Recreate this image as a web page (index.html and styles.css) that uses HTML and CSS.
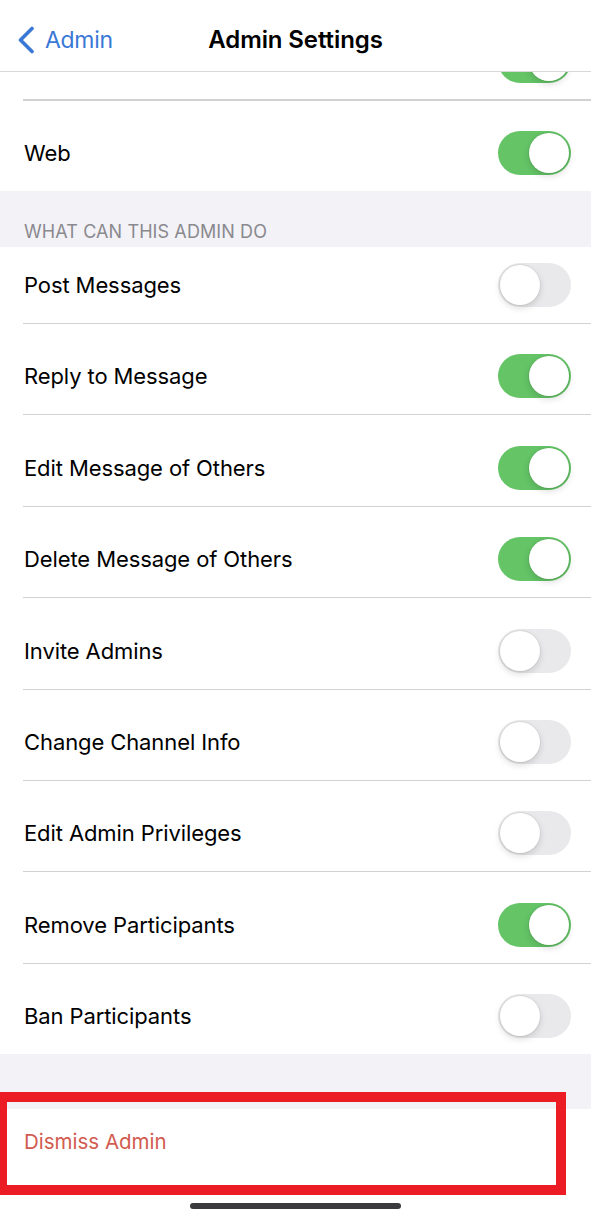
FILE: index.html
```html
<!DOCTYPE html>
<html lang="en">
<head>
    <meta charset="UTF-8">
    <meta name="viewport" content="width=device-width, initial-scale=1.0">
    <title>Admin Settings</title>
    <link rel="stylesheet" href="styles.css">
</head>
<body>
    <div class="screen">
        <div class="navbar">
            <a href="#" class="back">
                <svg class="chevron" width="18" height="28" viewBox="0 0 18 28">
                    <path d="M15 2.5 L3.5 14 L15 25.5" fill="none" stroke="currentColor" stroke-width="3.6" stroke-linecap="round" stroke-linejoin="round"/>
                </svg>
                <span>Admin</span>
            </a>
            <div class="title">Admin Settings</div>
            <div></div>
        </div>

        <div class="group">
            <div class="row partial">
                <span class="switch on"><span class="knob"></span></span>
            </div>
            <div class="row">
                <span class="label">Web</span>
                <span class="switch on"><span class="knob"></span></span>
            </div>
        </div>

        <div class="section-head">WHAT CAN THIS ADMIN DO</div>

        <div class="group">
            <div class="row first">
                <span class="label">Post Messages</span>
                <span class="switch"><span class="knob"></span></span>
            </div>
            <div class="row">
                <span class="label">Reply to Message</span>
                <span class="switch on"><span class="knob"></span></span>
            </div>
            <div class="row">
                <span class="label">Edit Message of Others</span>
                <span class="switch on"><span class="knob"></span></span>
            </div>
            <div class="row">
                <span class="label">Delete Message of Others</span>
                <span class="switch on"><span class="knob"></span></span>
            </div>
            <div class="row">
                <span class="label">Invite Admins</span>
                <span class="switch"><span class="knob"></span></span>
            </div>
            <div class="row">
                <span class="label">Change Channel Info</span>
                <span class="switch"><span class="knob"></span></span>
            </div>
            <div class="row">
                <span class="label">Edit Admin Privileges</span>
                <span class="switch"><span class="knob"></span></span>
            </div>
            <div class="row">
                <span class="label">Remove Participants</span>
                <span class="switch on"><span class="knob"></span></span>
            </div>
            <div class="row">
                <span class="label">Ban Participants</span>
                <span class="switch"><span class="knob"></span></span>
            </div>
        </div>

        <div class="section-gap"></div>

        <div class="danger-row">
            <a href="#" class="danger">Dismiss Admin</a>
        </div>

        <div class="home-bar"></div>

        <div class="highlight"></div>
    </div>
</body>
</html>
```

FILE: styles.css
```css
* {
    padding: 0;
    margin: 0;
    box-sizing: border-box;
    text-decoration: none;
}

body {
    background-color: #fff;
    font-family: "Inter", "Roboto", "Liberation Sans", sans-serif;
    color: #000;
}

.screen {
    position: relative;
    width: 591px;
    height: 1220px;
    overflow: hidden;
    display: flex;
    flex-direction: column;
}

/* top bar */
.navbar {
    height: 72px;
    padding-top: 8px;
    border-bottom: 1px solid #d7d7d9;
    display: grid;
    grid-template-columns: 1fr auto 1fr;
    align-items: center;
    background-color: #fff;
}
.back {
    display: flex;
    align-items: center;
    gap: 10px;
    padding-left: 17px;
    color: #3a78d6;
    font-size: 23px;
    letter-spacing: -0.3px;
}
.chevron {
    display: block;
}
.title {
    font-size: 24px;
    font-weight: 600;
    letter-spacing: -0.1px;
}

/* list rows */
.group {
    background-color: #fff;
}
.row {
    margin-left: 23px;
    padding: 14.4px 20px 0 1px;
    height: 91.4px;
    border-top: 1px solid #d2d2d5;
    display: flex;
    align-items: center;
    justify-content: space-between;
}
.row.first {
    border-top: none;
    padding-top: 0;
    height: 76px;
}
.row.partial {
    border-top: none;
    border-bottom: 1px solid #d2d2d5;
    padding-top: 0;
    height: 28px;
    overflow: hidden;
    align-items: flex-end;
    justify-content: flex-end;
}
.row.partial .switch {
    flex-shrink: 0;
    margin-bottom: 16px;
}
.label {
    font-size: 22px;
    letter-spacing: -0.1px;
}

/* switches */
.switch {
    width: 73px;
    height: 44px;
    border-radius: 22px;
    background-color: #e9e9eb;
    padding: 2px;
    display: flex;
    justify-content: flex-start;
}
.switch.on {
    background-color: #64c466;
    justify-content: flex-end;
}
.knob {
    width: 40px;
    height: 40px;
    border-radius: 50%;
    background-color: #fff;
    box-shadow: 0 0 0 1px rgba(0, 0, 0, 0.05), 0 3px 7px rgba(0, 0, 0, 0.14);
}

/* grey gaps */
.section-head {
    height: 55.6px;
    background-color: #f2f2f7;
    color: #8a898e;
    font-size: 18px;
    letter-spacing: 0.1px;
    padding: 0 0 5px 24px;
    display: flex;
    align-items: flex-end;
}
.section-gap {
    height: 54.6px;
    background-color: #f2f2f7;
}

.danger-row {
    height: 66px;
    padding-left: 24px;
    display: flex;
    align-items: center;
}
.danger {
    color: #d25b50;
    font-size: 20.5px;
}

.home-bar {
    width: 211px;
    height: 6px;
    border-radius: 3px;
    background-color: #3b3b3d;
    margin: 28px auto 0;
}

/* annotation box drawn over the dismiss row */
.highlight {
    position: absolute;
    left: -3px;
    top: 1092px;
    width: 569px;
    height: 103px;
    border: 10px solid #ec1c24;
}
```
